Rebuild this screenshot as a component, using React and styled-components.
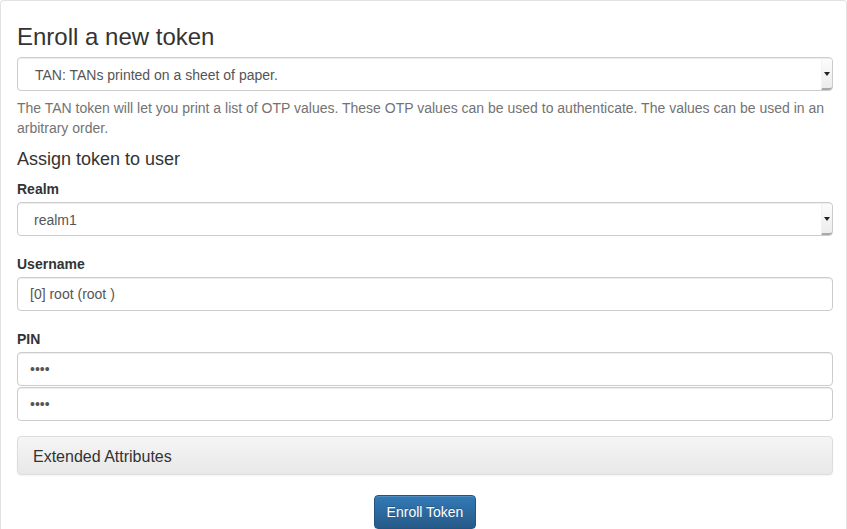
import React from "react";
import styled, { createGlobalStyle } from "styled-components";

const GlobalStyle = createGlobalStyle`
  html, body {
    margin: 0;
    padding: 0;
    background: #fff;
  }
  body {
    font-family: "Liberation Sans", Arial, sans-serif;
    font-size: 14px;
    line-height: 20px;
    color: #333;
  }
  * {
    box-sizing: border-box;
  }
`;

const Panel = styled.div`
  width: 847px;
  height: 529px;
  overflow: hidden;
  border: 1px solid #e2e2e2;
  border-bottom: none;
  border-radius: 4px 4px 0 0;
  padding: 0 13px 0 16px;
`;

const Title = styled.h3`
  font-size: 24px;
  font-weight: 400;
  line-height: 26px;
  margin: 23px 0 7px;
  color: #333;
`;

const SubTitle = styled.h4`
  font-size: 18px;
  font-weight: 400;
  line-height: 20px;
  margin: 11px 0 10px;
  color: #333;
`;

const SelectBox = styled.div`
  display: flex;
  align-items: stretch;
  height: 34px;
  border: 1px solid #ccc;
  border-radius: 4px;
  background: #fff;
  box-shadow: inset 0 1px 1px rgba(0, 0, 0, 0.075);
  color: #555;
  font-size: 14px;
`;

const SelectText = styled.span`
  flex: 1;
  display: flex;
  align-items: center;
  padding-top: 1px;
  padding-left: ${(props) => props.indent || 17}px;
`;

const ArrowBox = styled.span`
  width: 11px;
  margin: 1px 0 0;
  display: flex;
  align-items: center;
  justify-content: center;
  background: linear-gradient(to bottom, #fcfcfc 0%, #ececec 100%);
  border-left: 1px solid #f2f2f2;
  border-bottom: 2px solid #a9a9a9;
  border-radius: 0 3px 3px 0;
`;

const Caret = styled.span`
  width: 0;
  height: 0;
  border-left: 3px solid transparent;
  border-right: 3px solid transparent;
  border-top: 4px solid #222;
  margin-top: 1px;
`;

const HelpText = styled.p`
  margin: 7px 0 0;
  color: #737373;
  line-height: 20px;
`;

const Label = styled.label`
  display: block;
  font-weight: 700;
  line-height: 20px;
  margin: 0 0 3px;
  color: #333;
`;

const FormGroup = styled.div`
  margin-bottom: ${(props) => props.gap || 18}px;
`;

const Input = styled.input`
  display: block;
  width: 100%;
  height: 34px;
  margin-top: ${(props) => props.top || 0}px;
  padding: 6px 12px;
  border: 1px solid #ccc;
  border-radius: 4px;
  box-shadow: inset 0 1px 1px rgba(0, 0, 0, 0.075);
  font-family: "Liberation Sans", Arial, sans-serif;
  font-size: 14px;
  color: #555;
  background: #fff;
  outline: none;
`;

const Collapse = styled.div`
  height: 39px;
  border: 1px solid #ddd;
  border-radius: 4px;
  background: linear-gradient(to bottom, #f5f5f5 0%, #e8e8e8 100%);
  box-shadow: 0 1px 2px rgba(0, 0, 0, 0.05);
  padding: 10px 15px 8px;
  font-size: 16px;
  line-height: 19px;
  color: #333;
`;

const Actions = styled.div`
  display: flex;
  justify-content: center;
  margin-top: 20px;
`;

const Button = styled.button`
  height: 34px;
  padding: 6px 12px;
  border: 1px solid #245580;
  border-radius: 4px;
  background: linear-gradient(to bottom, #337ab7 0%, #265a88 100%);
  color: #fff;
  font-family: "Liberation Sans", Arial, sans-serif;
  font-size: 14px;
  line-height: 20px;
  text-shadow: 0 -1px 0 rgba(0, 0, 0, 0.2);
  box-shadow: inset 0 1px 0 rgba(255, 255, 255, 0.15), 0 1px 1px rgba(0, 0, 0, 0.075);
  cursor: pointer;
`;

const Select = ({ value, indent }) => (
  <SelectBox>
    <SelectText indent={indent}>{value}</SelectText>
    <ArrowBox>
      <Caret />
    </ArrowBox>
  </SelectBox>
);

export default function App() {
  return (
    <>
      <GlobalStyle />
      <Panel>
        <Title>Enroll a new token</Title>
        <Select value="TAN: TANs printed on a sheet of paper." indent={17} />
        <HelpText>
          The TAN token will let you print a list of OTP values. These OTP
          values can be used to authenticate. The values can be used in an
          arbitrary order.
        </HelpText>
        <SubTitle>Assign token to user</SubTitle>
        <FormGroup>
          <Label>Realm</Label>
          <Select value="realm1" indent={16} />
        </FormGroup>
        <FormGroup>
          <Label>Username</Label>
          <Input type="text" defaultValue="[0] root (root )" readOnly />
        </FormGroup>
        <FormGroup gap={15}>
          <Label>PIN</Label>
          <Input type="password" defaultValue="1234" readOnly />
          <Input type="password" defaultValue="1234" readOnly top={1} />
        </FormGroup>
        <Collapse>Extended Attributes</Collapse>
        <Actions>
          <Button type="button">Enroll Token</Button>
        </Actions>
      </Panel>
    </>
  );
}
